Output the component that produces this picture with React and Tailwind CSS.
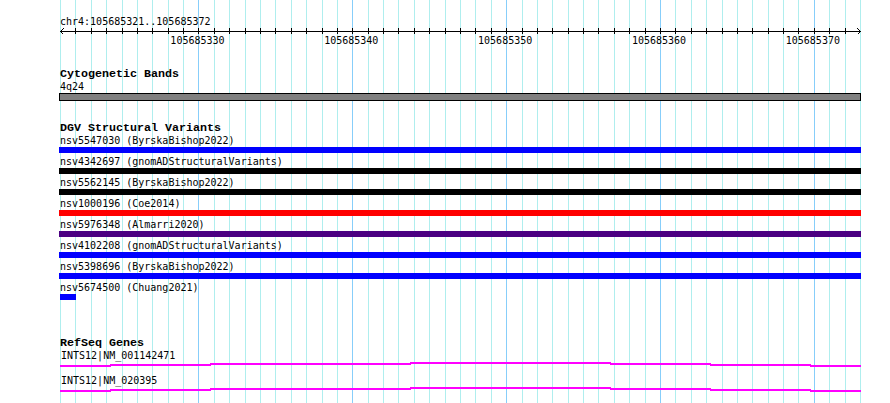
const START = 321;
const BP = 800 / 52;
const gx = (i) => Math.round(60 + i * BP);

const variants = [
  { id: "nsv5547030", src: "ByrskaBishop2022", bar: "w-[802px] -ml-px bg-[#0000ff]" },
  { id: "nsv4342697", src: "gnomADStructuralVariants", bar: "w-[802px] -ml-px bg-black" },
  { id: "nsv5562145", src: "ByrskaBishop2022", bar: "w-[802px] -ml-px bg-black" },
  { id: "nsv1000196", src: "Coe2014", bar: "w-[802px] -ml-px bg-[#ff0000]" },
  { id: "nsv5976348", src: "Almarri2020", bar: "w-[802px] -ml-px bg-[#4b0082]" },
  { id: "nsv4102208", src: "gnomADStructuralVariants", bar: "w-[802px] -ml-px bg-[#0000ff]" },
  { id: "nsv5398696", src: "ByrskaBishop2022", bar: "w-[802px] -ml-px bg-[#0000ff]" },
  { id: "nsv5674500", src: "Chuang2021", bar: "w-[16px] bg-[#0000ff]" },
];

const genes = ["INTS12|NM_001142471", "INTS12|NM_020395"];

// gene line segments: [from, to, top]
const segs = [
  [0, 50, 3],
  [50, 150, 2],
  [150, 350, 1],
  [350, 550, 0],
  [550, 650, 1],
  [650, 750, 2],
  [750, 800, 3],
];

function Grid() {
  const lines = [];
  for (let i = 0; i <= 52; i++) {
    const major = (START + i) % 10 === 0;
    lines.push(
      <rect
        key={i}
        x={gx(i)}
        y={0}
        width={1}
        height={403}
        fill={major ? "#87cefa" : "#afeeee"}
      />
    );
  }
  return (
    <svg className="absolute left-0 top-0" width={890} height={403}>
      {lines}
    </svg>
  );
}

function Ruler() {
  const ticks = [];
  for (let i = 1; i < 52; i++) {
    ticks.push(<rect key={i} x={gx(i) - 60} y={0} width={1} height={6} fill="#000" />);
  }
  return (
    <svg className="block overflow-visible" width={801} height={41} shapeRendering="crispEdges">
      <rect x={0} y={3} width={801} height={1} fill="#000" />
      {ticks}
      <polyline points="3.5,0.5 0.5,3.5 3.5,6.5" stroke="#000" fill="none" />
      <polyline points="797.5,0.5 800.5,3.5 797.5,6.5" stroke="#000" fill="none" />
      {[330, 340, 350, 360, 370].map((p) => (
        <text
          key={p}
          x={(p - START) * BP - 1}
          y={16}
          textAnchor="middle"
          fontFamily="'DejaVu Sans Mono', monospace"
          fontSize={10}
          fill="#000"
          shapeRendering="auto"
        >
          105685{p}
        </text>
      ))}
    </svg>
  );
}

function GeneLine() {
  return (
    <svg className="block" width={801} height={12} shapeRendering="crispEdges">
      {segs.map(([a, b, t], i) => (
        <rect key={i} x={a} y={t} width={b - a + 1} height={2} fill="#ff00ff" />
      ))}
      {segs.slice(1).map(([a, , t], i) => {
        const prev = segs[i][2];
        return (
          <rect key={"v" + i} x={a} y={Math.min(t, prev)} width={1} height={Math.abs(t - prev) + 2} fill="#ff00ff" />
        );
      })}
    </svg>
  );
}

export default function App() {
  return (
    <div className="relative w-[890px] h-[403px] bg-white overflow-hidden text-black font-['DejaVu_Sans_Mono',monospace]">
      <Grid />
      <div className="relative pl-[60px] w-[861px]">
        <div className="pt-[16px] text-[10px] leading-[12px]">chr4:105685321..105685372</div>
        <Ruler />

        <div className="font-['Liberation_Mono',monospace] font-bold text-[11.67px] leading-[11px]">Cytogenetic Bands</div>
        <div className="text-[10px] leading-[13px]">4q24</div>
        <div className="-ml-px w-[802px] h-[8px] border border-black bg-[#808080]" />

        <div className="mt-[22px] font-['Liberation_Mono',monospace] font-bold text-[11.67px] leading-[11px]">DGV Structural Variants</div>
        <div className="flex flex-col">
          {variants.map((v) => (
            <div key={v.id} className="flex flex-col">
              <div className="text-[10px] leading-[13px] whitespace-pre">
                {v.id} ({v.src})
              </div>
              <div className={"h-[6px] mb-[2px] " + v.bar} />
            </div>
          ))}
        </div>

        <div className="mt-[36px] font-['Liberation_Mono',monospace] font-bold text-[11.67px] leading-[11px]">RefSeq Genes</div>
        {genes.map((g) => (
          <div key={g} className="flex flex-col">
            <div className="ml-px text-[10px] leading-[13px]">{g}</div>
            <GeneLine />
          </div>
        ))}
      </div>
    </div>
  );
}
